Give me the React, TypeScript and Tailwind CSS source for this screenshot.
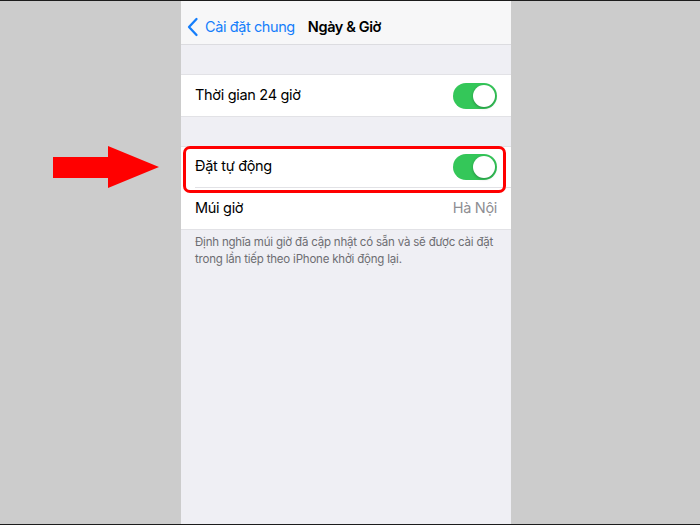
import React from 'react';

function Toggle() {
  return (
    <div className="relative h-[26px] w-[44px] rounded-full bg-[#34c759]">
      <div className="absolute right-[2px] top-[2px] h-[22px] w-[22px] rounded-full bg-white shadow-[0_1px_3px_rgba(0,0,0,0.3)]" />
    </div>
  );
}

function Row({ label, children, last }: { label: string; children?: React.ReactNode; last?: boolean }) {
  return (
    <div className="flex h-[41px] items-center bg-white pl-[14px]">
      <div className={`flex h-full flex-1 items-center justify-between pr-[14px] ${last ? '' : 'border-b border-[#e2e2e6]'}`}>
        <span className="relative -top-[1px] text-[14.5px] tracking-[-0.3px] text-black">{label}</span>
        {children}
      </div>
    </div>
  );
}

export default function App() {
  return (
    <div
      className="flex h-[525px] w-[700px] border-y border-[#1c1c1c] bg-[#cccccc]"
      style={{ fontFamily: 'Inter, "Noto Sans", sans-serif' }}
    >
      <div className="w-[181px] shrink-0 pl-[53px] pt-[145px]">
        <svg width="106" height="42" viewBox="0 0 106 42">
          <polygon points="0,11 55,11 55,0 106,21 55,42 55,32 0,32" fill="#ff0000" />
        </svg>
      </div>

      <div className="flex w-[330px] shrink-0 flex-col bg-[#efeff4]">
        <div className="flex h-[44px] items-center border-b border-[#dcdce0] bg-[#f7f7f8] pl-[6px] pt-[8px]">
          <svg width="12" height="20" viewBox="0 0 12 20" className="mr-[6px]">
            <path d="M9.5 2 L2 10 L9.5 18" fill="none" stroke="#157efb" strokeWidth="2.3" strokeLinecap="round" strokeLinejoin="round" />
          </svg>
          <span className="text-[14.5px] tracking-[-0.4px] text-[#157efb]">Cài đặt chung</span>
          <span className="ml-[13px] text-[14.5px] font-semibold tracking-[-0.4px] text-black">Ngày &amp; Giờ</span>
        </div>

        <div className="h-[30px] border-b border-[#e2e2e6]" />
        <div className="border-b border-[#e2e2e6]">
          <Row label="Thời gian 24 giờ" last>
            <Toggle />
          </Row>
        </div>

        <div className="h-[29px]" />
        <div className="relative border-y border-[#e2e2e6]">
          <Row label="Đặt tự động">
            <Toggle />
          </Row>
          <Row label="Múi giờ" last>
            <span className="relative -top-[1px] text-[14.5px] tracking-[-0.3px] text-[#8e8e93]">Hà Nội</span>
          </Row>
          <div className="absolute left-[2px] right-[5px] top-[-1px] h-[47px] rounded-[7px] border-[3px] border-[#ff0000]" />
        </div>

        <p className="px-[14px] pt-[4px] text-[11.5px] leading-[17px] tracking-[-0.2px] text-[#6d6d72]">
          Định nghĩa múi giờ đã cập nhật có sẵn và sẽ được cài đặt trong lần tiếp theo iPhone khởi động lại.
        </p>
      </div>

      <div className="flex-1" />
    </div>
  );
}
